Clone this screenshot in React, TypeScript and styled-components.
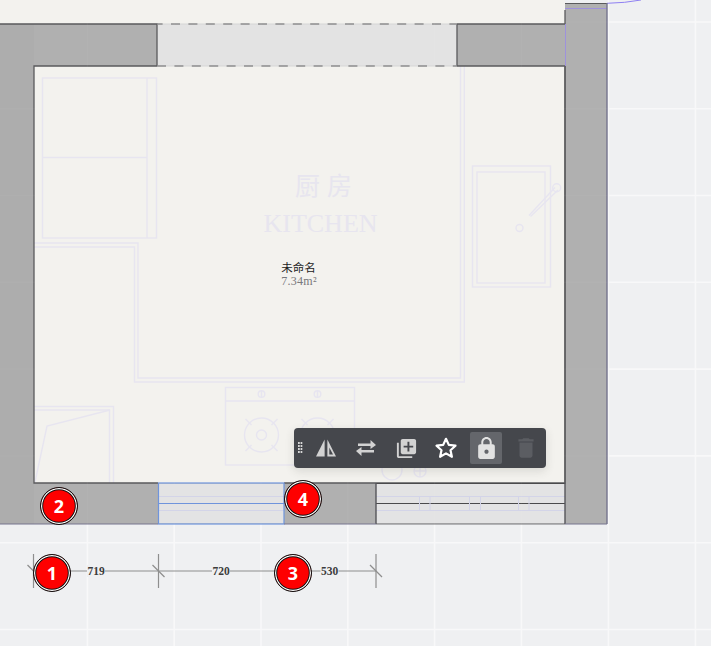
import React from "react";
import styled, { createGlobalStyle } from "styled-components";
import { MdLibraryAdd, MdLock, MdDelete } from "react-icons/md";

const Global = createGlobalStyle`
  html, body { margin: 0; padding: 0; background: #eff0f2; overflow: hidden; }
`;

const Canvas = styled.div`
  position: relative;
  width: 711px;
  height: 646px;
  overflow: hidden;
  background: #eff0f2;
  font-family: "Liberation Sans", sans-serif;
`;

const Plan = styled.svg`
  display: block;
  width: 711px;
  height: 646px;
`;

const Toolbar = styled.div`
  position: absolute;
  left: 294px;
  top: 428px;
  width: 252px;
  height: 40px;
  box-sizing: border-box;
  padding-left: 16px;
  display: flex;
  align-items: center;
  background: #45474c;
  border-radius: 4px;
  box-shadow: 0 3px 10px rgba(60, 60, 50, 0.14);
`;

const Grip = styled.div`
  position: absolute;
  left: 4px;
  top: 14px;
  width: 5px;
  height: 12px;
  background-image: radial-gradient(circle at 1px 1px, #d8d8d8 1px, transparent 1.1px);
  background-size: 2.6px 3px;
`;

const ToolButton = styled.button<{ $active?: boolean; $disabled?: boolean; $tone?: string }>`
  width: 32px;
  height: 32px;
  margin-right: 8px;
  padding: 0;
  border: 0;
  border-radius: 2px;
  flex: none;
  display: flex;
  align-items: center;
  justify-content: center;
  background: ${(p) => (p.$active ? "#64666b" : "transparent")};
  color: ${(p) => (p.$disabled ? "#5b5d62" : p.$tone || "#d2d2d2")};
`;

const Marker = styled.div<{ $x: number; $y: number }>`
  position: absolute;
  left: ${(p) => p.$x - 19}px;
  top: ${(p) => p.$y - 19}px;
  width: 38px;
  height: 38px;
  box-sizing: border-box;
  border-radius: 50%;
  background: #fe0000;
  border: 1px solid #111;
  box-shadow: inset 0 0 0 1.2px #fff, inset 0 0 0 2.2px #111;
  display: flex;
  align-items: center;
  justify-content: center;
  color: #fff;
  font-family: "Open Sans", "Noto Sans", sans-serif;
  font-weight: 700;
  font-size: 18px;
  line-height: 1;
`;

const FlipIcon = () => (
  <svg width="22" height="20" viewBox="0 0 22 20">
    <path d="M9.6 1.5V18.5H1z" fill="currentColor" />
    <path d="M12.4 1.5L21 18.5H12.4z" fill="currentColor" />
    <path d="M14.3 9.5L18 16.6H14.3z" fill="#45474c" />
  </svg>
);

const SwapIcon = () => (
  <svg width="22" height="18" viewBox="0 0 22 18">
    <path d="M3 4.5H15.5V1L21 6L15.5 10V7H3z" fill="currentColor" />
    <path d="M19 13.5H6.5V17L1 12L6.5 8V11H19z" fill="currentColor" />
  </svg>
);

const StarIcon = () => (
  <svg width="24" height="24" viewBox="0 0 24 24">
    <path
      d="M12 2.8l2.8 6.1 6.7.8-5 4.5 1.4 6.6-5.9-3.4-5.9 3.4 1.4-6.6-5-4.5 6.7-.8z"
      fill="none"
      stroke="currentColor"
      strokeWidth="2.2"
      strokeLinejoin="round"
    />
  </svg>
);

const gridX = [87.4, 174.2, 261, 347.8, 434.6, 521.4, 608.4, 695.4];
const gridY = [22, 108.7, 195.5, 282.3, 369.1, 455.9, 542.7, 629.5];

const fixture = "#e7e5f0";

const Dim = ({ x }: { x: number }) => (
  <g stroke="#8e8e8e" strokeWidth="1.2">
    <line x1={x} y1={554} x2={x} y2={588} />
    <line x1={x - 6} y1={565} x2={x + 6} y2={577} />
  </g>
);

const DimLabel = ({ x, children }: { x: number; children: React.ReactNode }) => (
  <g>
    <rect x={x - 9} y={565} width={18} height={12} fill="#eff0f2" />
    <text
      x={x}
      y={575}
      textAnchor="middle"
      fontFamily="'Liberation Serif', serif"
      fontWeight="700"
      fontSize="11.5"
      fill="#3c3c3c"
    >
      {children}
    </text>
  </g>
);

const Burner = ({ cx }: { cx: number }) => (
  <g>
    <circle cx={cx} cy={435} r={17} />
    <circle cx={cx} cy={435} r={5} />
    <line x1={cx - 16} y1={419} x2={cx - 10} y2={425} />
    <line x1={cx + 16} y1={419} x2={cx + 10} y2={425} />
    <line x1={cx - 16} y1={451} x2={cx - 10} y2={445} />
    <line x1={cx + 16} y1={451} x2={cx + 10} y2={445} />
  </g>
);

const Knob = ({ cx }: { cx: number }) => (
  <g>
    <circle cx={cx} cy={394} r={3.3} />
    <line x1={cx} y1={390.5} x2={cx} y2={397.5} />
  </g>
);

const WindowLines = ({ x1, x2, tone, light }: { x1: number; x2: number; tone: string; light: string }) => (
  <g>
    <rect x={x1} y={483.5} width={x2 - x1} height={40} fill="#e3e3e4" />
    <line x1={x1} y1={496.5} x2={x2} y2={496.5} stroke={light} />
    <line x1={x1} y1={510.5} x2={x2} y2={510.5} stroke={light} />
    <line x1={x1} y1={503.5} x2={x2} y2={503.5} stroke={tone} />
  </g>
);

export default function App() {
  return (
    <Canvas>
      <Global />
      <Plan viewBox="0 0 711 646" shapeRendering="geometricPrecision">
        <g stroke="#f8f8f9" strokeWidth="1.6">
          {gridX.map((x) => <line key={x} x1={x} y1={0} x2={x} y2={646} />)}
          {gridY.map((y) => <line key={y} x1={0} y1={y} x2={711} y2={y} />)}
        </g>

        <path d="M607 3.3Q625 3 641 0" fill="none" stroke="#8f80f2" strokeWidth="1" />

        <rect x={0} y={0} width={565} height={24} fill="#f3f2ee" />
        <rect x={0} y={24} width={607} height={500} fill="#b0b0b0" />
        <rect x={0} y={24} width={34} height={500} fill="#adadad" />
        <rect x={565} y={3} width={42} height={521} fill="#b0b0b0" />
        <rect x={34} y={66} width={531} height={417} fill="#f3f2ee" />
        <rect x={157} y={24} width={300} height={42} fill="#e3e3e3" />

        <g fill="none" stroke={fixture} strokeWidth="1.4">
          <rect x={42.5} y={78} width={114} height={160} />
          <line x1={147} y1={78} x2={147} y2={238} />
          <line x1={42.5} y1={157.5} x2={147} y2={157.5} />
          <path d="M34 243H138V378H460.500V66" />
          <path d="M34 247H134.500V382H464.300V66" />
          <path d="M34 406.500H113.500V483" />
          <path d="M34 410H109.500V483" />
          <path d="M35 482L47 426L110 410" />
          <rect x={225.5} y={387.5} width={129} height={77.5} />
          <line x1={225.5} y1={401} x2={354.5} y2={401} />
          <Knob cx={261.5} />
          <Knob cx={317.5} />
          <Burner cx={261.500} />
          <Burner cx={317.500} />
          <circle cx={392} cy={470} r={10} />
          <circle cx={420} cy={471} r={6} />
          <line x1={414} y1={471} x2={426} y2={471} />
          <line x1={420} y1={465} x2={420} y2={477} />
          <rect x={472.5} y={166} width={78} height={121} />
          <rect x={477} y={172} width={68} height={111} />
          <circle cx={519.5} cy={228} r={3.5} />
          <circle cx={556.7} cy={187.7} r={4} />
          <path d="M529 215.500L555 187.500M530.500 216.500L558 190" />
        </g>

        <g stroke="#5a5a5c" strokeWidth="1.3" fill="none">
          <path d="M0 24H157V66" />
          <path d="M457 24V66" />
          <path d="M457 24H565M0 24H0" />
          <path d="M157 66H34V483H158M284 483H565V66H457" />
          <path d="M565 24V10" />
          <line x1={565} y1={66} x2={565} y2={483} />
        </g>
        <g stroke="#d6d6d6" strokeWidth="1.2">
          <line x1={157} y1={24} x2={457} y2={24} />
          <line x1={157} y1={66} x2={457} y2={66} />
        </g>
        <g stroke="#666668" strokeWidth="1.2" strokeDasharray="9 8.400">
          <line x1={157} y1={24} x2={457} y2={24} strokeDashoffset={-14} />
          <line x1={157} y1={66} x2={457} y2={66} />
        </g>
        <line x1={565} y1={3.5} x2={607} y2={3.5} stroke="#5a5a5c" strokeWidth="1.2" />
        <line x1={565} y1={8.5} x2={607} y2={8.5} stroke="#9e92dc" strokeWidth="1" />
        <line x1={565.5} y1={24} x2={565.5} y2={66} stroke="#9e92dc" strokeWidth="1" />
        <line x1={607} y1={3} x2={607} y2={524} stroke="#76748e" strokeWidth="1.4" />

        <WindowLines x1={158.5} x2={284} tone="#6f94dc" light="#d3d4e8" />
        <rect x={158.5} y={483} width={125.5} height={41} fill="none" stroke="#6f94dc" strokeWidth="1.2" />
        <WindowLines x1={376} x2={565} tone="#4a4a4c" light="#d3d4e8" />
        <g stroke="#d3d4e8" fill="none">
          {[419.5, 430, 469.5, 480.5, 518.500, 529].map((x) => (
            <line key={x} x1={x} y1={496.5} x2={x} y2={510.5} />
          ))}
        </g>
        <line x1={376} y1={483.5} x2={565} y2={483.5} stroke="#4a4a4c" strokeWidth="1.2" />
        <line x1={376} y1={524} x2={565} y2={524} stroke="#77777a" strokeWidth="1.2" />
        <line x1={376} y1={483} x2={376} y2={524} stroke="#55555a" strokeWidth="1.4" />
        <line x1={565} y1={483} x2={565} y2={524} stroke="#55555a" strokeWidth="1.4" />
        <line x1={0} y1={524} x2={158} y2={524} stroke="#76748e" strokeWidth="1.2" />
        <line x1={284} y1={524} x2={376} y2={524} stroke="#76748e" strokeWidth="1.2" />
        <line x1={565} y1={524} x2={607} y2={524} stroke="#76748e" strokeWidth="1.2" />

        <g fill="#e7e5ef" textAnchor="middle">
          <text x={327} y={195} fontFamily="'Liberation Serif', 'Noto Sans CJK SC', serif" fontSize="25" letterSpacing="7">
            厨房
          </text>
          <text x={320.5} y={232} fontFamily="'Liberation Serif', serif" fontSize="26">
            KITCHEN
          </text>
        </g>
        <text x={298.5} y={272} textAnchor="middle" fontFamily="'Noto Sans CJK SC', sans-serif" fontSize="11.5" fill="#222">
          未命名
        </text>
        <text x={299} y={285} textAnchor="middle" fontFamily="'Liberation Serif', serif" fontSize="12" letterSpacing="0.3" fill="#77777a">
          7.34m²
        </text>

        <g stroke="#ffffff" strokeOpacity="0.035" strokeWidth="1.4">
          {gridX.slice(0, 7).map((x) => <line key={x} x1={x} y1={0} x2={x} y2={524} />)}
          {gridY.slice(0, 6).map((y) => <line key={y} x1={0} y1={y} x2={607} y2={y} />)}
        </g>

        <line x1={34} y1={571} x2={376} y2={571} stroke="#8e8e8e" strokeWidth="1.2" />
        <Dim x={33.5} />
        <Dim x={158.5} />
        <Dim x={376} />
        <DimLabel x={96}>719</DimLabel>
        <DimLabel x={221}>720</DimLabel>
        <DimLabel x={329.5}>530</DimLabel>
      </Plan>

      <Marker $x={52} $y={573}>1</Marker>
      <Marker $x={59} $y={506}>2</Marker>
      <Marker $x={293} $y={573}>3</Marker>
      <Marker $x={303} $y={499}>4</Marker>

      <Toolbar>
        <Grip />
        <ToolButton type="button" aria-label="flip"><FlipIcon /></ToolButton>
        <ToolButton type="button" aria-label="swap"><SwapIcon /></ToolButton>
        <ToolButton type="button" aria-label="duplicate"><MdLibraryAdd size={23} /></ToolButton>
        <ToolButton type="button" aria-label="favourite" $tone="#ffffff"><StarIcon /></ToolButton>
        <ToolButton type="button" aria-label="lock" $active $tone="#e2e2e2"><MdLock size={25} /></ToolButton>
        <ToolButton type="button" aria-label="delete" $disabled><MdDelete size={26} /></ToolButton>
      </Toolbar>
    </Canvas>
  );
}
